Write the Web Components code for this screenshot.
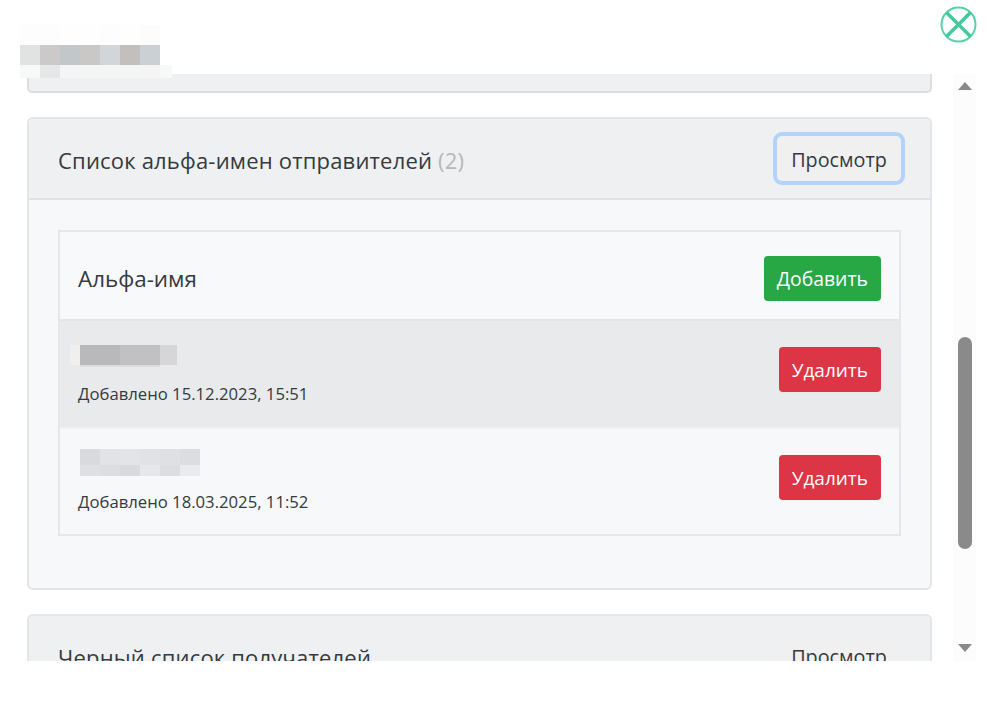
<!DOCTYPE html>
<html lang="ru">
<head>
<meta charset="utf-8">
<title>Список альфа-имен</title>
<style>
  html, body { margin: 0; padding: 0; background: #fff; }
  body { font-family: "Open Sans", "Noto Sans", sans-serif; color: #343a40; }
</style>
</head>
<body>
<settings-page>
  <mosaic-blur slot="logo" columns="20,20,20,20,20,20,20,12" rows="20,20,13"
    colors="#fdfdfd,#fdfdfd,#fefefe,#fdfefd,#fdfdfd,#fefefc,#fcfcfc,transparent,
            #e1e3e3,#cbc9c9,#c2c7ca,#cac7c7,#d2d6d9,#c3bfbc,#cbd0d4,transparent,
            #f7f8f8,#e7e7e7,#f3f5f6,#f4f5f5,#f5f5f5,#f4f6f6,#f5f5f5,#f7f8f8"></mosaic-blur>

  <panel-stub></panel-stub>

  <list-panel title-text="Список альфа-имен отправителей" count="2" focused>
    <alpha-list>
      <alpha-item stamp="Добавлено 15.12.2023, 15:51" striped>
        <mosaic-blur slot="name" columns="10,40,40,17" rows="20,2" shift="-8" drop="4"
          colors="#f0efee,#b9b9bb,#c1c1c3,#d6d6d8,
                  transparent,#dcdcde,#dcdcde,transparent"></mosaic-blur>
      </alpha-item>
      <alpha-item stamp="Добавлено 18.03.2025, 11:52">
        <mosaic-blur slot="name" columns="20,20,20,20,20,20" rows="16,11" shift="2"
          colors="#d9dadd,#e2e3e6,#e3e4e7,#e1e2e5,#dfe0e3,#dcdde0,
                  #dfe0e3,#dcdde0,#d9dadd,#e6e7ea,#dcdde0,#eaebee"></mosaic-blur>
      </alpha-item>
    </alpha-list>
  </list-panel>

  <list-panel title-text="Черный список получателей"></list-panel>
</settings-page>

<script>
class SettingsPage extends HTMLElement {
  constructor() {
    super();
    this.attachShadow({ mode: 'open' });
    this.shadowRoot.innerHTML = `
      <style>
        :host { display: block; position: relative; width: 986px; height: 705px; overflow: hidden; background: #fff; }
        .top { height: 74px; }
        .logo { position: absolute; left: 20px; top: 25px; z-index: 2; }
        .close { position: absolute; left: 940px; top: 6px; width: 37px; height: 37px; }
        .body { display: flex; height: 587px; }
        .content { width: 905px; margin-left: 27px; height: 587px; overflow: hidden; display: flex; flex-direction: column; gap: 24px; }
      </style>
      <div class="top"></div>
      <div class="logo"><slot name="logo"></slot></div>
      <svg class="close" viewBox="0 0 37 37" fill="none">
        <circle cx="18.5" cy="18.5" r="17" stroke="#55d2a9" stroke-width="2"/>
        <path d="M6.5 6.5 L30.5 30.5 M30.5 6.5 L6.5 30.5" stroke="#45c89d" stroke-width="3.4"/>
      </svg>
      <div class="body">
        <div class="content"><slot></slot></div>
        <page-scrollbar></page-scrollbar>
      </div>`;
  }
}

class PageScrollbar extends HTMLElement {
  constructor() {
    super();
    this.attachShadow({ mode: 'open' });
    this.shadowRoot.innerHTML = `
      <style>
        :host { display: flex; flex-direction: column; align-items: center; width: 23px; height: 587px; margin-left: 21px; background: #fcfcfd; }
        .arrow { flex: none; margin-top: 8px; width: 0; height: 0; border: 7px solid transparent; border-top: 0; border-bottom: 8px solid #8a8a8a; }
        .down { margin-top: auto; margin-bottom: 9px; transform: rotate(180deg); }
        .thumb { flex: none; width: 14px; height: 212px; margin-top: 247px; border-radius: 7px; background: #8a8a8a; }
      </style>
      <div class="arrow"></div>
      <div class="thumb"></div>
      <div class="arrow down"></div>`;
  }
}

class PanelStub extends HTMLElement {
  constructor() {
    super();
    this.attachShadow({ mode: 'open' });
    this.shadowRoot.innerHTML = `
      <style>
        :host { display: block; flex: none; box-sizing: border-box; height: 19px; background: #eff0f2;
          border: 2px solid #dcdde0; border-top: 0; border-radius: 0 0 5px 5px; }
      </style>`;
  }
}

class ListPanel extends HTMLElement {
  constructor() {
    super();
    this.attachShadow({ mode: 'open' });
    const title = this.getAttribute('title-text') || '';
    const count = this.getAttribute('count');
    const focused = this.hasAttribute('focused');
    const hasCount = count !== null;
    this.shadowRoot.innerHTML = `
      <style>
        :host { display: block; flex: none; box-sizing: border-box; background: #f7f8fa; border: 2px solid #e4e5e7; border-radius: 6px; }
        header { box-sizing: border-box; height: 81px; display: flex; align-items: center; justify-content: space-between;
          padding: 0 29px; background: #eff0f2; border-bottom: 2px solid #e0e1e4; border-radius: 5px 5px 0 0; }
        h2 { margin: 2px 0 0; font-size: 22px; letter-spacing: .19px; font-weight: 400; color: #343a40; white-space: nowrap; }
        h2 span { color: #b4b7bb; }
        button { box-sizing: border-box; width: 124px; height: 45px; padding: 2px 0 0; font: inherit; font-size: 19.8px; color: #343a40;
          background: #f0f0f1; border: 0; border-radius: 5px; }
        button.focus { box-shadow: 0 0 0 4px #b3d4f8; }
        .inner { padding: 30px 29px 52px; }
      </style>
      <header>
        <h2>${title}${hasCount ? ` <span>(${count})</span>` : ''}</h2>
        <button class="${focused ? 'focus' : ''}">Просмотр</button>
      </header>
      <div class="inner"><slot></slot></div>`;
  }
}

class AlphaList extends HTMLElement {
  constructor() {
    super();
    this.attachShadow({ mode: 'open' });
    this.shadowRoot.innerHTML = `
      <style>
        :host { display: block; border: 2px solid #e6e7ea; }
        .head { box-sizing: border-box; height: 89px; display: flex; align-items: center; justify-content: space-between;
          padding: 6px 18px 0; background: #f8f9fb; border-bottom: 2px solid #e4e5e8; }
        .head span { font-size: 22.4px; color: #343a40; }
      </style>
      <div class="head">
        <span>Альфа-имя</span>
        <action-button kind="add">Добавить</action-button>
      </div>
      <slot></slot>`;
  }
}

class AlphaItem extends HTMLElement {
  constructor() {
    super();
    this.attachShadow({ mode: 'open' });
    const stamp = this.getAttribute('stamp') || '';
    this.shadowRoot.innerHTML = `
      <style>
        :host { display: flex; box-sizing: border-box; height: 105px; padding: 20px 18px 0; align-items: flex-start; justify-content: space-between; }
        :host([striped]) { height: 108px; background: #e9eaec; border-bottom: 2px solid #f1f2f4; }
        .name { display: flow-root; height: 31px; }
        small { display: block; margin-top: 10px; font-size: 16.7px; line-height: 24px; color: #343a40; }
        action-button { margin-top: 6px; }
      </style>
      <div>
        <div class="name"><slot name="name"></slot></div>
        <small>${stamp}</small>
      </div>
      <action-button kind="remove">Удалить</action-button>`;
  }
}

class ActionButton extends HTMLElement {
  constructor() {
    super();
    this.attachShadow({ mode: 'open' });
    const isAdd = this.getAttribute('kind') === 'add';
    this.shadowRoot.innerHTML = `
      <style>
        :host { display: block; flex: none; }
        button { display: block; height: 45px; padding: 0 13px; font: inherit; font-size: ${isAdd ? '19.4px' : '19px'}; color: #fff;
          background: ${isAdd ? '#28a745' : '#dc3545'}; border: 0; border-radius: 4px; white-space: nowrap; }
      </style>
      <button><slot></slot></button>`;
  }
}

// stand-in for the pixelated (censored) bits of the screenshot
class MosaicBlur extends HTMLElement {
  constructor() {
    super();
    this.attachShadow({ mode: 'open' });
    const columns = this.getAttribute('columns').split(',').map(c => c + 'px').join(' ');
    const rows = this.getAttribute('rows').split(',').map(r => r + 'px').join(' ');
    const shift = this.getAttribute('shift') || 0;
    const drop = this.getAttribute('drop') || 0;
    const colors = this.getAttribute('colors').split(',').map(c => c.trim());
    this.shadowRoot.innerHTML = `
      <style>
        :host { display: grid; width: max-content; grid-template-columns: ${columns}; grid-template-rows: ${rows};
          margin-left: ${shift}px; margin-top: ${drop}px; }
      </style>
      ${colors.map(c => `<div style="background:${c}"></div>`).join('')}`;
  }
}

customElements.define('mosaic-blur', MosaicBlur);
customElements.define('action-button', ActionButton);
customElements.define('alpha-item', AlphaItem);
customElements.define('alpha-list', AlphaList);
customElements.define('list-panel', ListPanel);
customElements.define('panel-stub', PanelStub);
customElements.define('page-scrollbar', PageScrollbar);
customElements.define('settings-page', SettingsPage);
</script>
</body>
</html>
